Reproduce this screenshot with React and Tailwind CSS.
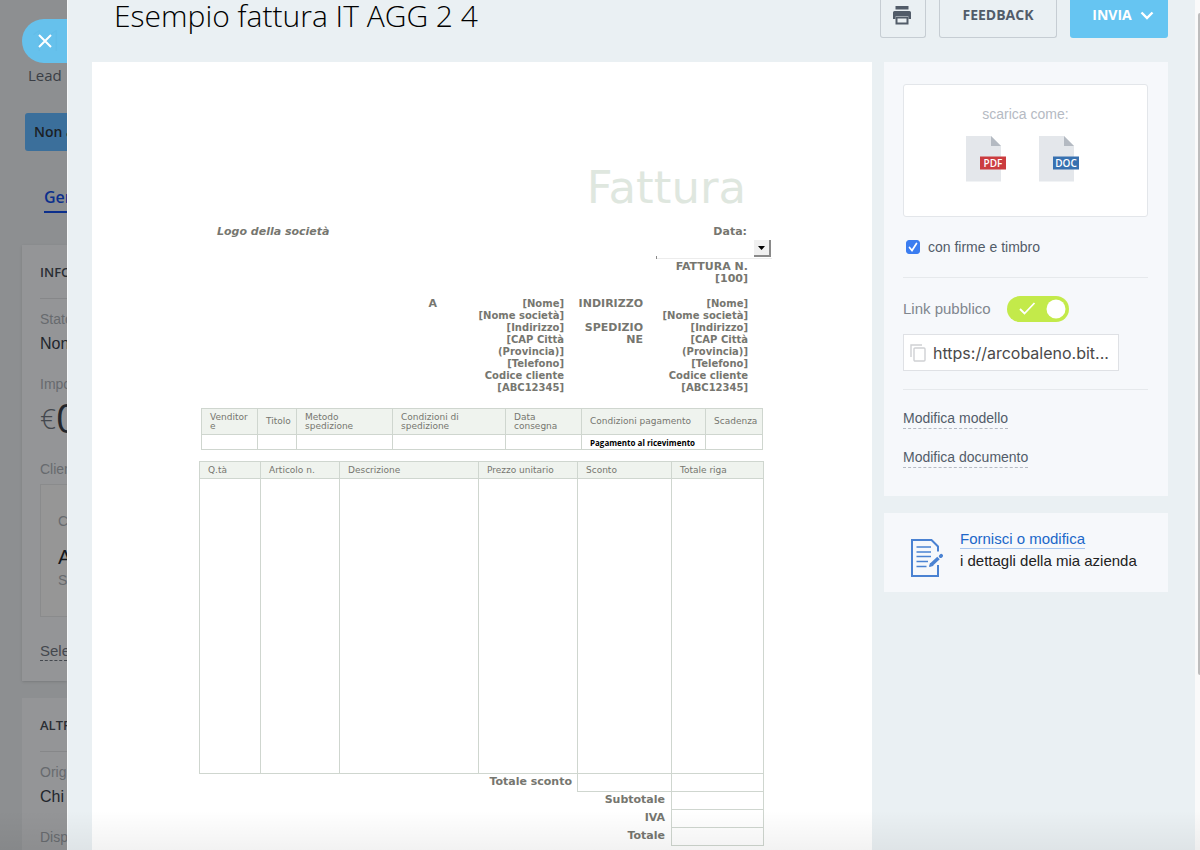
import { useState } from 'react'

const shippingColumns = [
  { label: 'Venditor\ne', width: 'w-[56px]', value: '' },
  { label: 'Titolo', width: 'w-[39px]', value: '' },
  { label: 'Metodo\nspedizione', width: 'w-[96px]', value: '' },
  { label: 'Condizioni di\nspedizione', width: 'w-[113px]', value: '' },
  { label: 'Data\nconsegna', width: 'w-[76px]', value: '' },
  { label: 'Condizioni pagamento', width: 'w-[124px]', value: 'Pagamento al ricevimento' },
  { label: 'Scadenza', width: 'w-[57px]', value: '' },
]

const itemColumns = [
  { label: 'Q.tà', width: 'w-[61px]' },
  { label: 'Articolo n.', width: 'w-[79px]' },
  { label: 'Descrizione', width: 'w-[139px]' },
  { label: 'Prezzo unitario', width: 'w-[99px]' },
  { label: 'Sconto', width: 'w-[94px]' },
  { label: 'Totale riga', width: 'w-[92px]' },
]

const addressLines = [
  '[Nome]',
  '[Nome società]',
  '[Indirizzo]',
  '[CAP Città',
  '(Provincia)]',
  '[Telefono]',
  'Codice cliente',
  '[ABC12345]',
]

function Field({ label, value, gap = 'mt-[18px]' }) {
  return (
    <div className={gap}>
      <p className="text-sm leading-5 text-[#676a6e]">{label}</p>
      <p className="mt-[3px] text-base leading-6 text-[#22262c]">{value}</p>
    </div>
  )
}

function SectionTitle({ children }) {
  return (
    <h3 className="border-b border-[#868789] pb-4 font-['Open_Sans'] text-[13px] font-semibold leading-5 text-[#2a2e34]">
      {children}
    </h3>
  )
}

// Lead page that stays visible behind the slide-over
function LeadBackdrop() {
  return (
    <aside className="w-[67px] shrink-0 overflow-hidden whitespace-nowrap bg-[#8d8f91] pt-5 font-['Liberation_Sans',sans-serif]">
      <p className="pl-[30px] font-['Open_Sans'] text-3xl font-light leading-10 text-[#3c4046]">11</p>
      <p className="mt-[5px] pl-7 font-['Open_Sans'] text-[15px] leading-5 text-[#3a3e45]">Lead</p>
      <div className="ml-[25px] mt-7 rounded-l-[3px] bg-[#3b6f9b] pl-[9px] font-['Open_Sans'] text-sm font-semibold leading-[38px] text-[#1b1f25]">
        Non a
      </div>
      <div className="ml-11 mt-9 border-b-2 border-[#0c2f8c] pb-1 font-['Open_Sans'] text-base font-semibold leading-5 text-[#0c2f8c]">
        Gen
      </div>

      <section className="ml-[22px] mt-8 bg-[#949597] pb-5 pl-[18px] pt-[17px] shadow-sm">
        <SectionTitle>INFO</SectionTitle>
        <Field label="Stato" value="Non" gap="mt-[10px]" />
        <p className="mt-[18px] text-sm leading-5 text-[#676a6e]">Impo</p>
        <p className="mt-1 flex items-center font-['Open_Sans'] leading-10">
          <span className="text-[28px] font-light text-[#44484e]">€</span>
          <span className="text-[40px] text-[#22262c]">0</span>
        </p>
        <p className="mt-[21px] text-sm leading-5 text-[#676a6e]">Clien</p>
        <div className="mt-[5px] border border-r-0 border-[#8a8b8c] bg-[#969696] pb-[26px] pl-[17px] pt-[26px]">
          <p className="text-sm leading-5 text-[#676a6e]">C</p>
          <p className="mt-[14px] text-xl leading-6 text-[#15181c]">A</p>
          <p className="mt-px text-sm leading-5 text-[#676a6e]">S</p>
        </div>
        <a href="#campi" className="mt-[25px] block border-b border-dashed border-[#44484e] text-[15px] leading-[18px] text-[#44484e]">
          Sele
        </a>
      </section>

      <section className="ml-[22px] mt-[17px] bg-[#949597] pb-5 pl-[18px] pt-[17px]">
        <SectionTitle>ALTR</SectionTitle>
        <Field label="Orig" value="Chi" gap="mt-[10px]" />
        <Field label="Disp" value="No" />
      </section>
    </aside>
  )
}

function FileIcon({ label, color }) {
  return (
    <svg viewBox="0 0 40 46" className="h-[46px] w-10">
      <path d="M0 0h25l10 10v35.500H0z" fill="#e4e7eb" />
      <path d="M25 0l10 10H25z" fill="#b4bac2" />
      <rect x="14" y="20.500" width="26" height="13" fill={color} />
      <text x="27" y="30.500" textAnchor="middle" fontSize="10" fontWeight="600" fontFamily="Open Sans" fill="#fff">
        {label}
      </text>
    </svg>
  )
}

function PrinterIcon() {
  return (
    <svg viewBox="0 0 20 20" className="h-5 w-5" fill="#525c69">
      <path d="M3.500 1h13v3.500h-13z" />
      <path d="M2.500 6h15A1.500 1.500 0 0 1 19 7.500V14h-2.500v-2.500h-13V14H1V7.500A1.500 1.500 0 0 1 2.500 6z" />
      <path d="M3.500 12h13v7.500h-13zM5.500 13.500v4h9v-4z" fillRule="evenodd" />
    </svg>
  )
}

function CompanyIcon() {
  return (
    <svg viewBox="0 0 32 39" className="h-[39px] w-8" fill="none" stroke="#4a82d2" strokeWidth="2">
      <path d="M27 13.500V8.500L20.500 2H1v36h26V27" />
      <path d="M5.500 9H20M5.500 14H20M5.500 18.500H20M5.500 23.500H17M5.500 28.500H15.500" strokeWidth="1.600" />
      <path d="M20.500 26.500l7-6.500" strokeWidth="3.600" />
      <path d="M18.500 28.500l1-3.500 2.500 2.500z" fill="#4a82d2" strokeWidth="1" />
      <path d="M29.700 18.200l.5-.5" strokeWidth="3.600" strokeLinecap="round" />
    </svg>
  )
}

function AddressBlock() {
  return (
    <div className="text-[10px]">
      {addressLines.map((line) => (
        <p key={line} className="leading-3">
          {line}
        </p>
      ))}
    </div>
  )
}

function InvoiceDocument() {
  return (
    <article className="min-w-0 flex-1 bg-white pl-[107px] pr-[100px] pt-24 font-['DejaVu_Sans',sans-serif] text-[11px] font-bold leading-3 text-[#76766f]">
      <div className="mx-auto w-[573px]">
        <h2 className="pr-[26px] text-right text-[45px] font-normal leading-[60px] text-[#dfe7df]">Fattura</h2>

        <div className="mt-2 flex justify-between pl-[18px] pr-[25px]">
          <p className="italic">Logo della società</p>
          <p>Data:</p>
        </div>
        <div className="mt-[2px] flex justify-end">
          <div className="relative w-[116px]">
            <select
              aria-label="Data"
              className="block h-[19px] w-full appearance-none border-b border-[#ececec] bg-transparent outline-none"
            >
              <option></option>
            </select>
            <span className="pointer-events-none absolute right-px top-0 flex h-[17px] w-[17px] items-center justify-center border-b-2 border-r-2 border-[#8a8a8a] bg-[#f0f0f0]">
              <svg viewBox="0 0 7 4" className="h-1 w-[7px]">
                <path d="M0 0h7L3.500 4z" fill="#000" />
              </svg>
            </span>
            <span className="absolute bottom-0 left-0 h-[3px] w-px bg-[#8a8a8a]" />
          </div>
        </div>
        <div className="mt-[2px] pr-6 text-right">
          <p>FATTURA N.</p>
          <p>[100]</p>
        </div>

        <div className="mt-[13px] grid grid-cols-[238px_127px_79px_105px] text-right">
          <p>A</p>
          <AddressBlock />
          <div>
            <p>INDIRIZZO</p>
            <p className="mt-3">SPEDIZIO</p>
            <p>NE</p>
          </div>
          <AddressBlock />
        </div>

        <table className="ml-[2px] mt-[14px] w-[562px] table-fixed border-collapse text-left text-[9px] leading-[9px]">
          <thead>
            <tr className="h-[26px] bg-[#eff3ee]">
              {shippingColumns.map((column) => (
                <th
                  key={column.label}
                  className={`${column.width} whitespace-pre border border-[#cfd6cf] pl-2 font-normal`}
                >
                  {column.label}
                </th>
              ))}
            </tr>
          </thead>
          <tbody>
            <tr className="h-[15px] font-['Open_Sans'] text-[8px] font-bold text-black">
              {shippingColumns.map((column) => (
                <td key={column.label} className="whitespace-nowrap border border-[#cfd6cf] pl-2">
                  {column.value}
                </td>
              ))}
            </tr>
          </tbody>
        </table>

        <table className="mt-[11px] w-[565px] table-fixed border-collapse text-left">
          <thead>
            <tr className="h-[17px] bg-[#eff3ee] text-[9px] leading-[9px]">
              {itemColumns.map((column) => (
                <th key={column.label} className={`${column.width} border border-[#cfd6cf] pl-2 font-normal`}>
                  {column.label}
                </th>
              ))}
            </tr>
          </thead>
          <tbody>
            <tr className="h-[295px]">
              {itemColumns.map((column) => (
                <td key={column.label} className="border border-[#cfd6cf]" />
              ))}
            </tr>
          </tbody>
          <tfoot className="text-right">
            <tr className="h-[18px]">
              <th colSpan={4} className="pb-px pr-[5px]">
                Totale sconto
              </th>
              <td className="border border-[#cfd6cf]" />
              <td className="border border-[#cfd6cf]" />
            </tr>
            {['Subtotale', 'IVA', 'Totale'].map((label) => (
              <tr key={label} className="h-[18px]">
                <th colSpan={5} className="pb-px pr-[6px]">
                  {label}
                </th>
                <td className="border border-[#cfd6cf]" />
              </tr>
            ))}
          </tfoot>
        </table>
      </div>
    </article>
  )
}

function Sidebar() {
  const [signed, setSigned] = useState(true)
  const [isPublic, setIsPublic] = useState(true)

  return (
    <aside className="w-[284px] shrink-0 text-[#525c69]">
      <section className="bg-[#f6f8fb] pb-7 pl-[19px] pr-5 pt-[22px] text-sm leading-5">
        <div className="rounded-[3px] border border-[#e3e6ea] bg-white pb-[34px] pt-[19px] text-center">
          <p className="text-[#b5bac3]">scarica come:</p>
          <div className="mt-3 flex justify-center gap-[33px] pr-[6px]">
            <button type="button" aria-label="Scarica PDF">
              <FileIcon label="PDF" color="#cb3c3f" />
            </button>
            <button type="button" aria-label="Scarica DOC">
              <FileIcon label="DOC" color="#3871b0" />
            </button>
          </div>
        </div>

        <label className="mt-5 flex items-center gap-2 pl-[3px]">
          <span className="relative flex h-[14px] w-[14px]">
            <input
              type="checkbox"
              checked={signed}
              onChange={(event) => setSigned(event.target.checked)}
              className="h-[14px] w-[14px] appearance-none rounded-[3px] border border-[#3b7df0] bg-white checked:bg-[#3b7df0]"
            />
            {signed ? (
              <svg viewBox="0 0 14 14" className="pointer-events-none absolute inset-0 h-[14px] w-[14px]">
                <path d="M3.500 7.500l2.500 3 4.500-7" fill="none" stroke="#fff" strokeWidth="1.700" strokeLinecap="round" />
              </svg>
            ) : null}
          </span>
          con firme e timbro
        </label>

        <div className="mt-5 border-y border-[#e6e9ec] py-[18px]">
          <label className="flex items-center gap-4 text-[15px] text-[#80868e]">
            Link pubblico
            <span className="relative flex h-[26px] w-[62px]">
              <input
                type="checkbox"
                checked={isPublic}
                onChange={(event) => setIsPublic(event.target.checked)}
                className="h-full w-full appearance-none rounded-full bg-[#c9ced3] checked:bg-[#c3ea4a]"
              />
              <svg viewBox="0 0 62 26" className="pointer-events-none absolute inset-0 h-full w-full">
                <path d="M13 13l4.500 4.500L27.500 7" fill="none" stroke="#fff" strokeWidth="1.800" />
                <circle cx="49" cy="13" r="9.500" fill="#fff" />
              </svg>
            </span>
          </label>
          <div className="mt-3 flex h-[37px] w-[216px] items-center border border-[#dfe1e5] bg-white pl-[6px]">
            <svg viewBox="0 0 16 18" className="h-[18px] w-4 shrink-0" fill="none" stroke="#cfd1d4" strokeWidth="1.400">
              <path d="M1 13V1h11" />
              <rect x="4" y="4" width="11" height="13" rx="1" />
            </svg>
            <input
              readOnly
              aria-label="Link pubblico"
              value="https://arcobaleno.bit..."
              className="w-full min-w-0 bg-transparent pl-[7px] font-['Inter'] text-base text-[#4a4a4a] outline-none"
            />
          </div>
        </div>

        <div className="mt-[18px] flex flex-col items-start gap-[18px]">
          <a href="#modello" className="border-b border-dashed border-[#b5bac3]">
            Modifica modello
          </a>
          <a href="#documento" className="border-b border-dashed border-[#b5bac3]">
            Modifica documento
          </a>
        </div>
      </section>

      <section className="mt-[17px] flex items-start gap-[17px] bg-[#f6f8fb] pb-[15px] pl-[27px] pt-[17px]">
        <div className="pt-2">
          <CompanyIcon />
        </div>
        <div className="text-[15px] leading-[18px]">
          <a href="#azienda" className="inline-block border-b border-[#a9c6ee] text-[#2067c9]">
            Fornisci o modifica
          </a>
          <p className="mt-[3px] text-[#222]">i dettagli della mia azienda</p>
        </div>
      </section>
    </aside>
  )
}

export default function App() {
  return (
    <div className="relative flex h-screen overflow-hidden bg-[#eaf0f3]">
      <LeadBackdrop />
      <button
        type="button"
        aria-label="Chiudi"
        className="absolute left-[22px] top-[19px] flex h-11 w-[45px] items-center rounded-l-full bg-[#64c4f1]/95 pl-4"
      >
        <svg viewBox="0 0 14 14" className="h-[14px] w-[14px]" fill="none" stroke="#fff" strokeWidth="2">
          <path d="M1 1l12 12M13 1L1 13" />
        </svg>
      </button>

      <main className="flex min-w-0 flex-1 flex-col border-l border-[#f6f8f9] pl-6 pr-[27px] font-['Liberation_Sans',sans-serif]">
        <header className="flex h-[62px] shrink-0 items-start justify-between pl-[22px]">
          <h1 className="font-['Open_Sans'] text-3xl font-light leading-8 text-black">Esempio fattura IT AGG 2 4</h1>
          <div className="flex font-['Open_Sans'] text-sm font-bold text-[#525c69]">
            <button
              type="button"
              aria-label="Stampa"
              className="flex h-[38px] w-[46px] items-start justify-center rounded-b-[3px] border border-t-0 border-[#c6cdd3] pr-[2px] pt-[5px]"
            >
              <PrinterIcon />
            </button>
            <button
              type="button"
              className="ml-[13px] h-[38px] w-[118px] rounded-b-[3px] border border-t-0 border-[#c6cdd3] pb-2"
            >
              FEEDBACK
            </button>
            <button
              type="button"
              className="ml-[13px] flex h-[38px] w-[98px] items-center justify-center gap-2 rounded-b-[3px] bg-[#66c5f2] pb-2 pl-2 text-white"
            >
              INVIA
              <svg viewBox="0 0 14 9" className="h-[9px] w-[14px]" fill="none" stroke="#fff" strokeWidth="2.400">
                <path d="M1.500 1.500L7 7l5.500-5.500" />
              </svg>
            </button>
          </div>
        </header>

        <div className="flex min-h-0 flex-1 gap-3">
          <InvoiceDocument />
          <Sidebar />
        </div>
      </main>

      <div className="flex w-[5px] shrink-0 justify-end bg-[#fafafa] pt-[13px]">
        <div className="h-[662px] w-[2px] rounded-l bg-[#bdbdbd]" />
      </div>
      <div className="pointer-events-none absolute inset-x-0 bottom-0 h-10 bg-gradient-to-b from-transparent to-black/5" />
    </div>
  )
}
